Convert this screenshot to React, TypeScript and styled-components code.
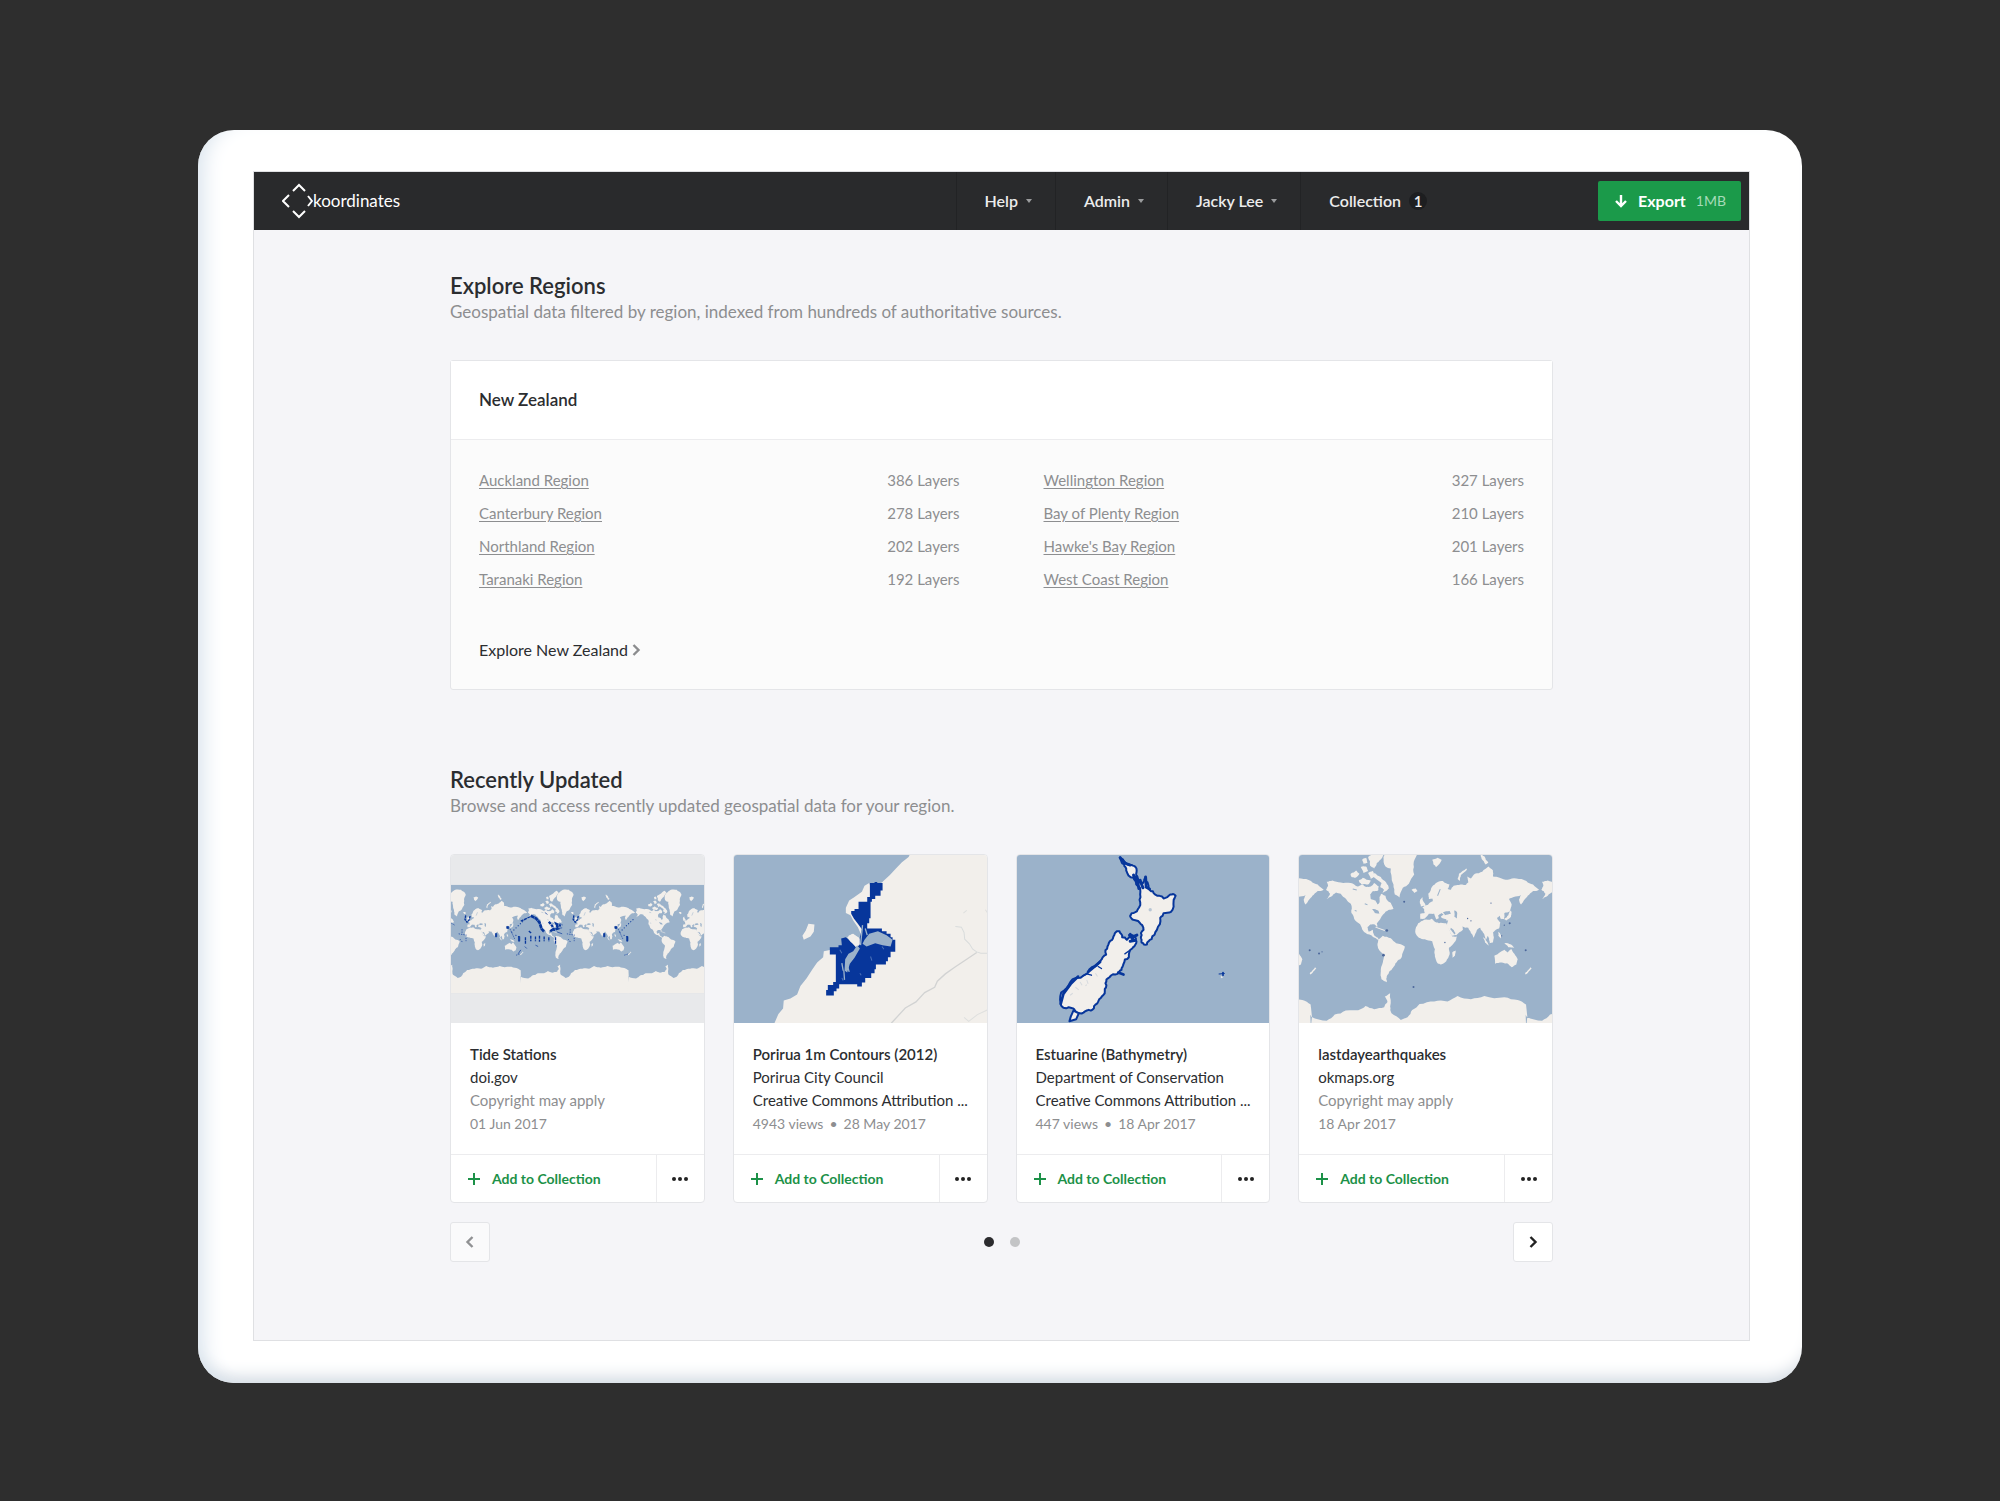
import React from "react";
import styled, { createGlobalStyle } from "styled-components";

/* ---------- theme values ---------- */

const ink = "#2b2d30";
const muted = "#8d8e90";
const green = "#1b9a4a";
const line = "#e4e5e8";
const water = "#9bb2ca";
const land = "#f2efeb";
const navy = "#07369b";

const Global = createGlobalStyle`
  *, *::before, *::after { box-sizing: border-box; }
  body {
    margin: 0;
    background: #2e2e2e;
    color: ${ink};
    font-family: Lato, "Noto Sans", sans-serif;
    font-size: 16px;
    line-height: 24px;
  }
  button { font: inherit; cursor: pointer; }
  h1, h2, h3, p, ul { margin: 0; padding: 0; }
  ul { list-style: none; }
`;

/* ---------- frame ---------- */

const Stage = styled.div`
  min-height: 100vh;
  padding: 130px 198px 118px;
`;

const Tablet = styled.div`
  padding: 41px 52px 42px 55px;
  border-radius: 36px;
  background: #fff;
  box-shadow:
    inset 20px 0 20px -14px #dbe5ee,
    inset 0 -18px 16px -12px #d3dae2;
`;

const Screen = styled.div`
  border: 1px solid #dfe0e3;
  background: #f5f5f8;
`;

/* ---------- top bar ---------- */

const TopBar = styled.header`
  display: flex;
  align-items: center;
  height: 58px;
  padding-right: 8px;
  padding-left: 28px;
  background: #292a2c;
`;

const Brand = styled.a`
  display: flex;
  align-items: center;
  color: #fff;
  font-size: 17px;
  text-decoration: none;
`;

const Nav = styled.nav`
  display: flex;
  align-self: stretch;
  margin-left: auto;
  margin-right: 148px;
`;

const NavItem = styled.button`
  display: flex;
  align-items: center;
  gap: 8px;
  padding: 0 23px 0 28px;
  border: 0;
  border-left: 1px solid #222325;
  background: none;
  color: #ececed;
  font-weight: 600;
`;

const Caret = styled.span`
  border: 3px solid transparent;
  border-top: 4px solid #9b9c9e;
  border-bottom: 0;
`;

const Count = styled.span`
  width: 18px;
  border-radius: 9px;
  background: #1d1e20;
  font-size: 15px;
  line-height: 18px;
  text-align: center;
`;

const Export = styled.button`
  display: flex;
  align-items: center;
  gap: 10px;
  height: 40px;
  padding: 0 15px 0 16px;
  border: 0;
  border-radius: 2px;
  background: ${green};
  color: #fff;
  font-weight: 700;
`;

const Size = styled.span`
  color: #a6dbb9;
  font-size: 14px;
  font-weight: 400;
`;

/* ---------- content ---------- */

const Content = styled.main`
  max-width: 1103px;
  margin: 0 auto;
  padding: 42px 0 78px;
`;

const Section = styled.section`
  & + & { margin-top: 76px; }
`;

const Title = styled.h2`
  font-size: 22px;
  font-weight: 600;
  line-height: 28px;
`;

const Lead = styled.p`
  margin-bottom: 36px;
  color: ${muted};
  font-size: 17px;
`;

const Panel = styled.div`
  border: 1px solid ${line};
  border-radius: 3px;
  background: #fbfbfb;
`;

const PanelHead = styled.h3`
  padding: 27px 28px;
  border-bottom: 1px solid #ececee;
  background: #fff;
  font-size: 17px;
  font-weight: 600;
  line-height: 24px;
`;

const PanelBody = styled.div`
  padding: 24px 28px 27px;
`;

const Regions = styled.ul`
  display: grid;
  grid-template-columns: 1fr 1fr;
  column-gap: 84px;
  margin-bottom: 42px;
  color: ${muted};
  font-size: 15px;
  line-height: 33px;
`;

const Region = styled.li`
  display: flex;
  justify-content: space-between;
`;

const RegionLink = styled.a`
  color: inherit;
  text-decoration: underline;
  text-underline-offset: 2px;
`;

const More = styled.a`
  display: inline-flex;
  align-items: center;
  gap: 2px;
  color: ${ink};
  text-decoration: none;
`;

/* ---------- layer cards ---------- */

const Cards = styled.div`
  display: grid;
  grid-template-columns: repeat(4, 1fr);
  gap: 28px;
`;

const Card = styled.article`
  overflow: hidden;
  min-width: 0;
  border: 1px solid ${line};
  border-radius: 4px;
  background: #fff;
`;

const MapView = styled.svg`
  display: block;
  width: 100%;
  height: 168px;
`;

const Info = styled.div`
  padding: 20px 16px 19px 19px;
  border-bottom: 1px solid #ececee;
  font-size: 15px;
  line-height: 23px;
`;

const Name = styled.h3`
  font-size: 15px;
  font-weight: 600;
  line-height: 23px;
`;

const Detail = styled.p<{ $muted?: boolean }>`
  overflow: hidden;
  color: ${(p) => (p.$muted ? muted : ink)};
  text-overflow: ellipsis;
  white-space: nowrap;
`;

const Meta = styled.p`
  display: flex;
  gap: 6px;
  color: ${muted};
  font-size: 14px;
`;

const Actions = styled.div`
  display: flex;
  height: 47px;
`;

const Add = styled.button`
  display: flex;
  flex: 1;
  align-items: center;
  gap: 12px;
  padding: 0 17px;
  border: 0;
  background: none;
  color: #1c9148;
  font-size: 14px;
  font-weight: 700;
`;

const Menu = styled.button`
  display: grid;
  place-items: center;
  width: 48px;
  padding: 0;
  border: 0;
  border-left: 1px solid #ececee;
  background: none;
`;

const Pager = styled.div`
  display: flex;
  align-items: center;
  justify-content: space-between;
  margin-top: 19px;
`;

const Step = styled.button`
  display: grid;
  place-items: center;
  width: 40px;
  height: 40px;
  padding: 0;
  border: 1px solid ${line};
  border-radius: 3px;
  background: #fff;
  color: #222;
  &:disabled { background: #fafafb; color: #909193; }
`;

const Dots = styled.div`
  display: flex;
  gap: 16px;
`;

const Dot = styled.button<{ $on?: boolean }>`
  width: 10px;
  height: 10px;
  padding: 0;
  border: 0;
  border-radius: 50%;
  background: ${(p) => (p.$on ? "#2b2b2e" : "#c3c4c6")};
`;

/* ---------- map drawing ---------- */

/* Turns a coarse outline into a ragged coastline by seeded midpoint displacement. */
function coast(outline: string, rough = 0.1, passes = 2): string {
  let pts = outline.trim().split(/\s+/).map((p) => p.split(",").map(Number));
  let seed = pts.length * 97 + 13;
  const rand = () => {
    seed = (seed * 1103515245 + 12345) % 2147483648;
    return seed / 2147483648 - 0.5;
  };
  for (let n = 0; n < passes; n++) {
    const next: number[][] = [];
    pts.forEach((a, i) => {
      const b = pts[(i + 1) % pts.length];
      const dx = b[0] - a[0];
      const dy = b[1] - a[1];
      const k = Math.hypot(dx, dy) > 120 ? 0 : rand() * rough * 2;
      next.push(a, [(a[0] + b[0]) / 2 - dy * k, (a[1] + b[1]) / 2 + dx * k]);
    });
    pts = next;
  }
  return "M" + pts.map((p) => p[0].toFixed(1) + "," + p[1].toFixed(1)).join("L") + "Z";
}

const continents = [
  // North and Central America
  "108,96 125,92 150,98 180,100 200,110 215,104 226,112 240,110 250,100 264,110 262,122 246,124 238,134 240,148 254,152 260,164 266,158 266,142 272,132 284,138 290,152 300,160 308,178 296,180 284,186 274,198 268,208 258,220 260,234 252,224 238,224 230,232 234,246 246,240 250,256 262,264 262,270 248,262 236,254 222,248 214,238 204,220 190,206 182,190 180,162 166,148 150,132 136,128 122,140 108,148 118,132 106,120 112,108",
  // South America
  "262,268 276,258 300,265 316,280 342,290 336,308 328,328 314,340 306,354 296,364 288,378 288,397 272,388 270,365 276,338 280,318 266,302 260,286",
  // Greenland
  "278,22 290,2 312,-14 350,-16 372,0 378,16 368,44 370,74 354,102 336,114 326,143 312,134 308,104 302,78 300,56 284,50",
  // Africa
  "382,220 400,210 422,207 430,214 444,220 466,220 474,238 484,260 498,260 490,278 474,294 476,314 466,334 450,344 440,340 432,320 432,298 424,274 402,268 384,264 373,246",
  // Europe and Asia
  "389,208 388,192 402,190 400,178 394,172 410,166 418,158 426,154 424,146 414,148 412,132 424,110 438,98 456,94 476,104 470,118 480,120 488,108 504,106 524,106 532,98 528,80 540,86 552,72 574,66 592,50 606,62 606,80 626,84 650,90 676,86 706,94 726,104 744,120 726,124 710,138 700,150 690,164 684,150 690,136 668,142 654,148 662,164 656,184 640,190 640,208 630,208 626,198 618,204 628,218 624,236 606,248 608,262 600,272 590,258 584,270 576,248 568,234 558,240 548,264 540,250 532,234 514,230 516,240 496,256 484,258 472,238 468,224 472,212 456,210 450,200 458,194 452,190 442,196 444,208 436,208 430,192 422,192 414,192 402,206",
  // Australia
  "610,318 626,308 640,300 650,308 660,297 670,312 680,328 676,344 662,352 648,340 632,338 612,342",
  // Antarctica
  "60,464 52,484 62,500 108,512 132,494 165,482 214,476 224,468 250,478 280,472 290,456 282,440 298,430 298,470 302,490 330,510 350,502 364,480 386,462 430,455 470,455 500,438 540,448 580,438 640,442 680,450 705,464 706,610 60,610",
  // Japan, Madagascar, Borneo, New Guinea, Sumatra, Philippines
  "656,180 662,186 660,200 646,212 640,208 652,196",
  "484,308 494,302 492,318 484,324",
  "594,268 608,260 606,278 596,280",
  "640,280 660,284 670,294 652,292",
  "576,262 588,276 594,288 582,278",
  "622,246 630,256 630,266 622,258",
  // British Isles, Iceland, Svalbard, Novaya Zemlya
  "388,150 394,142 398,156 404,168 390,170",
  "362,120 374,116 380,124 370,130",
  "424,30 440,24 452,30 446,42 436,52 428,44",
  "500,88 504,72 526,56 528,60 510,76 506,94",
  "570,12 580,20 592,38 584,44 572,28",
  // Canadian archipelago
  "268,136 280,120 268,112 272,100 256,88 240,78 252,70 270,82 286,98 294,116 286,124",
  "180,72 196,62 206,72 194,84 182,82",
  "204,92 216,84 240,92 232,104 212,104",
  "210,52 226,50 232,64 218,70",
  "232,22 252,10 276,-10 288,0 274,24 258,40 250,56 238,48",
  "214,30 226,24 230,40 218,42",
  "232,70 246,64 252,80 240,88",
  // New Zealand
  "718,352 722,356 712,366 704,374 702,370 712,360",
].map((o) => coast(o));

const inlandWater = [
  "456,188 476,184 480,192 462,196",
  "490,182 498,186 498,206 490,200",
  "440,206 466,208 466,216 442,214",
  "480,234 494,250 490,254 478,238",
  "244,178 262,182 266,192 252,190",
].map((o) => coast(o));

function World({ x = 0, y = 0, scale = 1 }: { x?: number; y?: number; scale?: number }) {
  return (
    <g transform={`translate(${x} ${y}) scale(${scale})`}>
      {continents.map((d, i) => (
        <path key={i} d={d} fill={land} />
      ))}
      {inlandWater.map((d, i) => (
        <path key={i} d={d} fill={water} />
      ))}
      <path d="M440 138l8-20M236 228l26 12 20 2M186 118l12 3M222 162l8 3M192 182l6 2" stroke={water} strokeWidth="3" fill="none" />
      <path d="M254 232l28 10" stroke={land} strokeWidth="3" />
    </g>
  );
}

function TideMap() {
  const stations = (dx: number) => (
    <g transform={`translate(${dx} 0)`} fill="none" stroke={navy}>
      <path d="M63 197l-2 12 6 8 6-6 4-14" strokeWidth="4" strokeDasharray="7 2" />
      <path d="M212 256l14 6M200 248l20-20 24-22" strokeWidth="3" strokeDasharray="3 6" />
      <path d="M152 251h4v10h-4zM186 230h6v6h-6zM221 260h4v14h-4z" strokeWidth="2" fill={navy} />
      <path d="M214 316l12-4M46 268l8 10M64 264v10M52 238v14M20 220l10 6M42 252l24 4M196 238l14 30" strokeWidth="2" strokeDasharray="4 3" />
    </g>
  );
  return (
    <MapView viewBox="19 15 757 505" preserveAspectRatio="xMidYMid slice" role="img" aria-label="Tide Stations map">
      <rect x="0" y="0" width="800" height="540" fill="#e8e9eb" />
      <svg x="0" y="105" width="800" height="325" viewBox="0 105 800 325">
        <rect x="0" y="105" width="800" height="325" fill={water} />
        <World x={-127} y={128} scale={0.503} />
        <World x={196} y={128} scale={0.503} />
        <World x={519} y={128} scale={0.503} />
      </svg>
      {stations(0)}
      {stations(324)}
      <g fill="none" stroke={navy}>
        <path d="M258 198l16 8 10 12 6 18 8 10" strokeWidth="8" strokeDasharray="12 1" />
        <path d="M312 216l10 12 6 12 12-4-6-14 14 6M316 244l12-8" strokeWidth="7" strokeDasharray="9 2" />
        <path d="M228 214l34-16M242 262v20M252 244l8 6M258 258v16M272 260v14M284 258v18M298 260v14M312 262v12M332 262v20" strokeWidth="4" strokeDasharray="9 2" />
        <path d="M228 300l-8 12M272 286l8 4M240 290l6 6M300 188l8 6M336 246l16 6M340 236l12-2" strokeWidth="2" />
      </g>
    </MapView>
  );
}

function PoriruaMap() {
  return (
    <MapView viewBox="27 15 757 505" preserveAspectRatio="xMidYMid slice" role="img" aria-label="Porirua contours map">
      <rect width="820" height="540" fill={land} />
      <path
        fill={water}
        d="M0 0H560L550 22 530 38 512 56 494 76 476 92 470 98 436 112 432 100 418 108 410 126 388 142 372 152 362 174 362 190 376 196 384 212 398 232 406 250 404 268 384 252 370 258 376 280 350 300 318 300 296 304 294 322 276 338 262 358 244 386 226 408 216 434 196 446 176 452 174 476 160 492 148 520H0Z"
      />
      <path fill={land} d="M250 222l18 2-2 22-10 14-20 10-4-12 10-16z" />
      <path
        fill={navy}
        d="M434 100H448V97H456V100H472V122H466V138H450V148H440V156H436V205H432V220H426V236H470V244H484V252H496V262H502V270H510V306H496V322H488V334H482V344H452V358H448V370H438V384H420V398H410V410H396V403H342V416H334V424H326V437H303V420H308V405H324V396H332V314H314V292H340V286H350L348 266 362 262 378 276 392 292 402 286 404 262 410 238 398 222 386 206 378 192V184H388V178H400V156H426V142H434Z"
      />
      <path fill={land} d="M366 262l16-10 20 12 2 20-14 4-14-12z" />
      <path fill={water} d="M418 270l14-18 26-8 26 12 18 14-6 20-24-4-22-6-26 10-12-8zM396 286l8 10-16 28-14 18-8 26-8-6 2-34 10-16 14-8z" />
      <path d="M412 226l-6 60M420 236l6 20M350 340l4 22M356 362l2 28M366 346l6 20" stroke={water} strokeWidth="4" fill="none" />
      <path d="M436 320l4 12M470 290l6 8M344 300l6 10M404 370l4 6M350 384l4 8" stroke="#4c72b8" strokeWidth="3" fill="none" />
      <path d="M690 230l18 2 8 16 2 20 14 14 10 16 12 8 12 4h20" stroke="#d9dcdc" strokeWidth="3" fill="none" />
      <path d="M754 308l-30 20-36 24-28 20-24 22-8 18-30 16-26 28-32 18-42 46" stroke="#d2d3d3" strokeWidth="4" fill="none" />
      <path d="M786 480l-30 14-26 20-14-12M714 190l10-8M780 180l8 12" stroke="#dedfde" strokeWidth="3" fill="none" />
    </MapView>
  );
}

const northIsland = coast(
  "336,24 350,38 366,46 382,52 384,72 390,88 404,100 410,86 418,98 424,120 440,134 466,146 486,134 502,138 496,154 488,186 466,190 456,204 446,240 430,268 416,284 400,278 398,262 406,240 402,226 384,212 366,200 372,190 388,180 394,150 396,118 384,104 376,84 354,62 348,44",
  0.2
);
const southIsland = coast(
  "320,250 334,244 342,262 356,270 366,252 380,262 384,280 372,296 362,322 346,342 340,360 328,372 304,382 292,400 290,424 278,444 262,464 248,482 226,488 204,486 190,474 160,468 156,450 176,414 204,384 244,358 276,334 294,314 298,290 312,270",
  0.2
);

function EstuarineMap() {
  return (
    <MapView viewBox="27 15 757 505" preserveAspectRatio="xMidYMid slice" role="img" aria-label="Estuarine bathymetry map">
      <rect width="820" height="540" fill={water} />
      <g fill={land} stroke={navy} strokeWidth="6" strokeLinejoin="round">
        <path d={northIsland} />
        <path d={southIsland} />
        <path d="M196 482l16 8-8 18-20 6 4-14z" />
      </g>
      <g fill="none" stroke={navy} strokeLinecap="round">
        <path d="M336 24l14 16 16 6M386 82l6 34M396 92l8 22M412 82l2 30 10 6M376 76l10 24M364 256l14 16-12 2M372 262l14-6" strokeWidth="9" />
        <path d="M158 462l8-30 22-30 22-22M330 368l16 6M240 366l36-30" strokeWidth="8" />
        <path d="M224 378l12-6 14 4M270 350l10 6M350 312l14-10" strokeWidth="4" />
        <path d="M632 372l16-1" strokeWidth="3" />
        <path d="M644 368v8" strokeWidth="5" />
      </g>
      <path d="M202 412l10 8M216 396l6 10M236 390l4 12M262 370l6 10M186 436l8-6M232 408l4-4" stroke="#d6dade" strokeWidth="3" fill="none" />
      <circle cx="426" cy="180" r="5" fill="#b9c6d4" />
      <path d="M638 380l4 4" stroke={land} strokeWidth="4" />
    </MapView>
  );
}

function QuakeMap() {
  const quakes = [
    [288, 242, 4], [278, 316, 4], [340, 156, 3], [368, 411, 3], [57, 301, 3], [85, 311, 3], [94, 306, 2],
    [530, 206, 2], [540, 213, 2], [640, 226, 2], [656, 220, 3], [632, 258, 2], [704, 301, 3], [462, 278, 2], [600, 160, 2],
  ];
  return (
    <MapView viewBox="25 15 757 505" preserveAspectRatio="xMidYMid slice" role="img" aria-label="Earthquake map">
      <rect width="820" height="540" fill={water} />
      <World x={-645} />
      <World />
      <World x={645} />
      {quakes.map(([cx, cy, r]) => (
        <circle key={`${cx}-${cy}`} cx={cx} cy={cy} r={r} fill="#4c679b" />
      ))}
    </MapView>
  );
}

/* ---------- icons ---------- */

function LogoMark() {
  return (
    <svg width="31" height="36" viewBox="0 0 31 36" fill="none" stroke="#fff" strokeWidth="2" aria-hidden="true">
      <path d="M7 12L1 18l6 6M11 8l6-6 6 6M11 28l6 6 6-6M26 13l4 5-4 5" />
    </svg>
  );
}

function Chevron({ back }: { back?: boolean }) {
  return (
    <svg width="12" height="12" viewBox="0 0 12 12" fill="none" stroke="currentColor" strokeWidth="2.400" aria-hidden="true">
      <path d={back ? "M8.500 1L3.500 6l5 5" : "M3.500 1l5 5-5 5"} />
    </svg>
  );
}

const Grey = styled.span`
  display: flex;
  color: #8b8c8e;
`;

/* ---------- data ---------- */

const regions: [string, number][] = [
  ["Auckland Region", 386],
  ["Wellington Region", 327],
  ["Canterbury Region", 278],
  ["Bay of Plenty Region", 210],
  ["Northland Region", 202],
  ["Hawke's Bay Region", 201],
  ["Taranaki Region", 192],
  ["West Coast Region", 166],
];

const layers = [
  { name: "Tide Stations", by: "doi.gov", licence: "Copyright may apply", open: false, views: "", date: "01 Jun 2017", Map: TideMap },
  { name: "Porirua 1m Contours (2012)", by: "Porirua City Council", licence: "Creative Commons Attribution ...", open: true, views: "4943 views", date: "28 May 2017", Map: PoriruaMap },
  { name: "Estuarine (Bathymetry)", by: "Department of Conservation", licence: "Creative Commons Attribution ...", open: true, views: "447 views", date: "18 Apr 2017", Map: EstuarineMap },
  { name: "lastdayearthquakes", by: "okmaps.org", licence: "Copyright may apply", open: false, views: "", date: "18 Apr 2017", Map: QuakeMap },
];

export default function App() {
  return (
    <>
      <Global />
      <Stage>
        <Tablet>
          <Screen>
            <TopBar>
              <Brand href="#">
                <LogoMark />
                koordinates
              </Brand>
              <Nav>
                {["Help", "Admin", "Jacky Lee"].map((label) => (
                  <NavItem key={label}>
                    {label}
                    <Caret />
                  </NavItem>
                ))}
                <NavItem>
                  Collection
                  <Count>1</Count>
                </NavItem>
              </Nav>
              <Export>
                <svg width="14" height="14" viewBox="0 0 14 14" fill="none" stroke="currentColor" strokeWidth="2.400" aria-hidden="true">
                  <path d="M7 1v11M2 7l5 5 5-5" />
                </svg>
                Export
                <Size>1MB</Size>
              </Export>
            </TopBar>
            <Content>
              <Section>
                <Title>Explore Regions</Title>
                <Lead>Geospatial data filtered by region, indexed from hundreds of authoritative sources.</Lead>
                <Panel>
                  <PanelHead>New Zealand</PanelHead>
                  <PanelBody>
                    <Regions>
                      {regions.map(([name, count]) => (
                        <Region key={name}>
                          <RegionLink href="#">{name}</RegionLink>
                          <span>{count} Layers</span>
                        </Region>
                      ))}
                    </Regions>
                    <More href="#">
                      Explore New Zealand
                      <Grey>
                        <Chevron />
                      </Grey>
                    </More>
                  </PanelBody>
                </Panel>
              </Section>
              <Section>
                <Title>Recently Updated</Title>
                <Lead>Browse and access recently updated geospatial data for your region.</Lead>
                <Cards>
                  {layers.map(({ name, by, licence, open, views, date, Map }) => (
                    <Card key={name}>
                      <Map />
                      <Info>
                        <Name>{name}</Name>
                        <Detail>{by}</Detail>
                        <Detail $muted={!open}>{licence}</Detail>
                        <Meta>
                          {views && (
                            <>
                              <span>{views}</span>
                              <span>•</span>
                            </>
                          )}
                          <span>{date}</span>
                        </Meta>
                      </Info>
                      <Actions>
                        <Add>
                          <svg width="12" height="12" viewBox="0 0 12 12" stroke="currentColor" strokeWidth="2" aria-hidden="true">
                            <path d="M6 0v12M0 6h12" />
                          </svg>
                          Add to Collection
                        </Add>
                        <Menu aria-label="More actions">
                          <svg width="16" height="4" viewBox="0 0 16 4" fill="#222" aria-hidden="true">
                            <circle cx="2" cy="2" r="2" />
                            <circle cx="8" cy="2" r="2" />
                            <circle cx="14" cy="2" r="2" />
                          </svg>
                        </Menu>
                      </Actions>
                    </Card>
                  ))}
                </Cards>
                <Pager>
                  <Step disabled aria-label="Previous page">
                    <Chevron back />
                  </Step>
                  <Dots>
                    <Dot $on aria-label="Page 1" />
                    <Dot aria-label="Page 2" />
                  </Dots>
                  <Step aria-label="Next page">
                    <Chevron />
                  </Step>
                </Pager>
              </Section>
            </Content>
          </Screen>
        </Tablet>
      </Stage>
    </>
  );
}
